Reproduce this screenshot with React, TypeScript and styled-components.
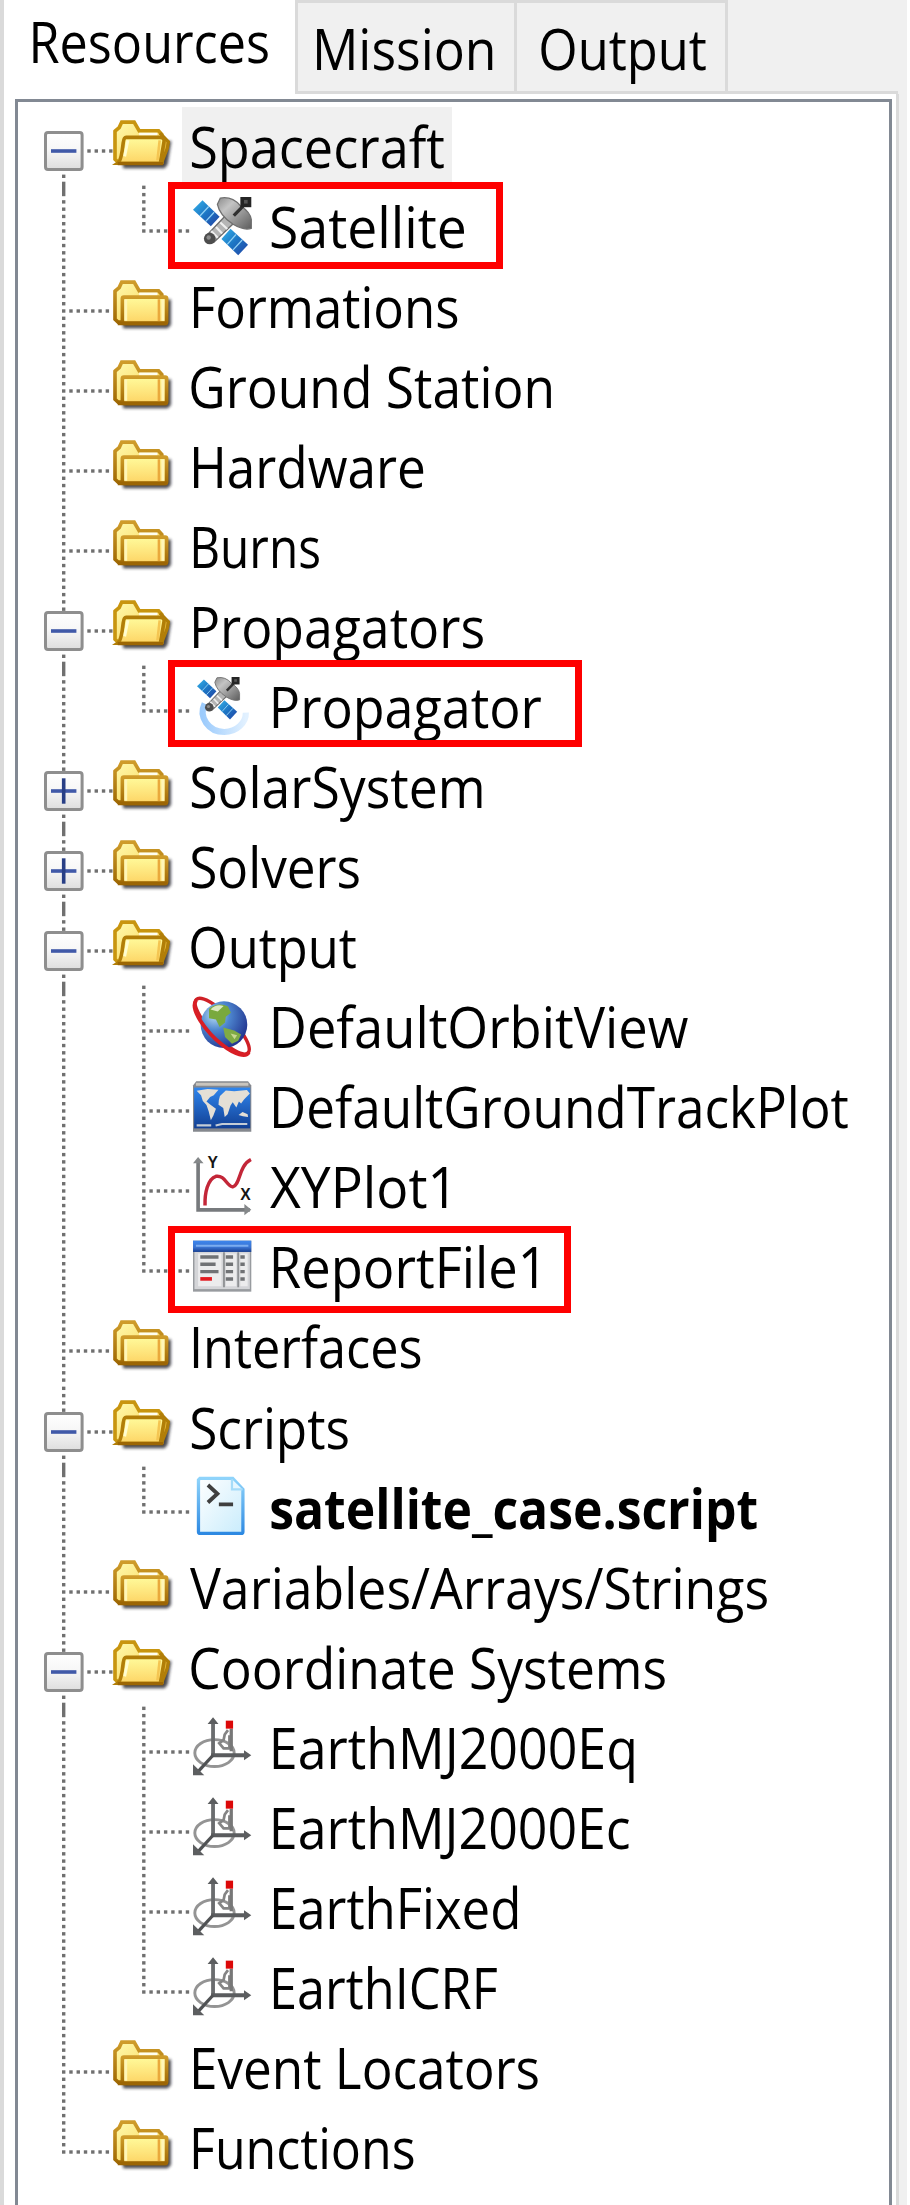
import React from 'react';
import styled, { createGlobalStyle } from 'styled-components';

const FONT = '"Open Sans", "Noto Sans", sans-serif';
const SIZE = 56;
const ROW = 80.04;
const STEP = ROW / 11;
const PANEL_X = 18;
const ICON = 58.3;

const GlobalStyle = createGlobalStyle`
  html, body { margin: 0; background: #fff; overflow: hidden; }
  * { box-sizing: border-box; }
`;

const Window = styled.div`
  display: flex;
  flex-direction: column;
  width: 907px;
  height: 2205px;
  overflow: hidden;
  background: #f0f0f0;
  border-left: 4px solid #dadada;
  font-family: ${FONT};
  font-size: ${SIZE}px;
  color: #000;
`;

const TabBar = styled.div`
  display: flex;
  flex: none;
  height: 94px;
`;

const Tab = styled.div<{ $width: number; $active?: boolean }>`
  flex: none;
  width: ${p => p.$width}px;
  height: 94px;
  padding-top: ${p => (p.$active ? 0 : 4)}px;
  line-height: 80px;
  background: ${p => (p.$active ? '#fff' : '#f0f0f0')};
  border: solid #dadada;
  border-width: ${p => (p.$active ? '0' : '3px 3px 3px 0')};
`;

const ActiveEdge = styled.div`
  flex: none;
  width: 3px;
  background: #dadada;
`;

const TabFiller = styled.div`
  width: 170px;
  border-bottom: 3px solid #dadada;
`;

const Page = styled.div`
  flex: 1;
  width: 895px;
  padding: 5px 4px 0 11px;
  background: #fff;
  border-right: 3px solid #dadada;
`;

const Panel = styled.div`
  width: 877px;
  height: 2120px;
  padding-top: 5px;
  border: 3px solid #828993;
  background: #fff;
`;

const Row = styled.div`
  position: relative;
  display: flex;
  height: ${ROW}px;
`;

const Gutter = styled.svg`
  flex: none;
  overflow: visible;
`;

const IconSlot = styled.svg`
  position: relative;
  flex: none;
  width: ${ICON}px;
  height: ${ICON}px;
  margin: 9.6px 11px 0 0;
  overflow: visible;
`;

const LabelCell = styled.div<{ $selected?: boolean }>`
  flex: none;
  width: ${p => (p.$selected ? '270px' : 'auto')};
  height: ${ROW}px;
  line-height: 80px;
  background: ${p => (p.$selected ? '#f0f0f0' : 'transparent')};
`;

const Text = styled.span<{ $bold?: boolean }>`
  display: inline-block;
  white-space: pre;
  font-weight: ${p => (p.$bold ? 700 : 400)};
  transform-origin: 0 0;
`;

const Marker = styled.div<{ $top: number; $width: number }>`
  position: absolute;
  left: ${168 - PANEL_X}px;
  top: ${p => p.$top}px;
  width: ${p => p.$width}px;
  height: 87px;
  border: 7px solid #fe0000;
`;

/* Text stretched so its visible glyphs run from `from` to `to`, relative to its cell. */
function Fitted({ text, from, to, bold, dy = -0.9 }: { text: string; from: number; to: number; bold?: boolean; dy?: number }) {
  const transform = React.useMemo(() => {
    const ctx = document.createElement('canvas').getContext('2d')!;
    ctx.font = `${bold ? 700 : 400} ${SIZE}px ${FONT}`;
    const m = ctx.measureText(text);
    const k = (to - from) / (m.actualBoundingBoxRight + m.actualBoundingBoxLeft);
    return `translate(${from + m.actualBoundingBoxLeft * k}px, ${dy}px) scaleX(${k})`;
  }, [text, from, to, bold, dy]);
  return <Text $bold={bold} style={{ transform }}>{text}</Text>;
}

const Defs = () => (
  <svg width="0" height="0" style={{ position: 'absolute' }}>
    <defs>
      <linearGradient id="front" x1="0" y1="0" x2="0" y2="1">
        <stop offset="0" stopColor="#fffb9c" /><stop offset="1" stopColor="#fdd465" />
      </linearGradient>
      <linearGradient id="back" x1="0" y1="0" x2="1" y2="1">
        <stop offset="0" stopColor="#fffbb0" /><stop offset=".6" stopColor="#fbe070" /><stop offset="1" stopColor="#e9b030" />
      </linearGradient>
      <linearGradient id="rim" x1="0" y1="0" x2="0" y2="1">
        <stop offset="0" stopColor="#cf9c2a" /><stop offset="1" stopColor="#a06a04" />
      </linearGradient>
      <linearGradient id="box" x1="0" y1="0" x2="0" y2="1">
        <stop offset="0" stopColor="#fff" /><stop offset=".45" stopColor="#f7f7f7" /><stop offset="1" stopColor="#dedede" />
      </linearGradient>
      <linearGradient id="solar" x1="0" y1="0" x2="1" y2="1">
        <stop offset="0" stopColor="#35b3ea" /><stop offset=".5" stopColor="#1c75c4" /><stop offset="1" stopColor="#2344a4" />
      </linearGradient>
      <linearGradient id="metal" x1="0" y1="0" x2="1" y2="1">
        <stop offset="0" stopColor="#8c8c8c" /><stop offset=".3" stopColor="#c4c4c4" /><stop offset="1" stopColor="#5c5c5c" />
      </linearGradient>
      <linearGradient id="ring" x1="0" y1="0" x2="1" y2="0">
        <stop offset="0" stopColor="#9ccbfc" /><stop offset="1" stopColor="#e2f1ff" />
      </linearGradient>
      <radialGradient id="ocean" cx=".3" cy=".3" r=".8">
        <stop offset="0" stopColor="#b9dcf5" /><stop offset=".4" stopColor="#4d86cf" /><stop offset="1" stopColor="#1f2f8c" />
      </radialGradient>
      <linearGradient id="sea" x1="0" y1="0" x2="0" y2="1">
        <stop offset="0" stopColor="#2f86ee" /><stop offset="1" stopColor="#123f93" />
      </linearGradient>
      <linearGradient id="title" x1="0" y1="0" x2="0" y2="1">
        <stop offset="0" stopColor="#3c86ee" /><stop offset=".6" stopColor="#3a72cf" /><stop offset="1" stopColor="#173f92" />
      </linearGradient>
      <linearGradient id="sheet" x1="0" y1="0" x2="1" y2="1">
        <stop offset="0" stopColor="#fff" /><stop offset="1" stopColor="#c9ecfc" />
      </linearGradient>
      <linearGradient id="sheetRim" x1="0" y1="0" x2="0" y2="1">
        <stop offset="0" stopColor="#8fd4fb" /><stop offset="1" stopColor="#2d89e2" />
      </linearGradient>
      <filter id="soft" x="-20%" y="-20%" width="140%" height="140%"><feGaussianBlur stdDeviation=".4" /></filter>
    </defs>
  </svg>
);

const BACK = 'M.55 3.9 1.7 2.9 2.4 1.4H5.8L7.2 3.8H12.5L13.4 4.8V12.4H1.4L.55 11.6Z';

const ClosedFolder = () => (
  <>
    <path d="M2 6.4 15.9 6.2V13.2L15 14.1H2.8Z" fill="#1c1c24" opacity=".8" filter="url(#soft)" />
    <path d={BACK} fill="url(#back)" stroke="url(#rim)" strokeWidth="1" />
    <path d="M7.2 4.7H12.2" stroke="#fffef0" strokeWidth=".9" />
    <rect x="2.6" y="5.5" width="12.1" height="7.2" rx=".4" fill="url(#front)" stroke="url(#rim)" strokeWidth="1.05" />
    <path d="M3.5 6.2V12M13.7 6.2V12" stroke="#fff6b8" strokeWidth=".8" />
    <path d="M12.6 6.1V12.1" stroke="#e9a93c" strokeWidth=".7" />
    <path d="M1.3 12.75H14.9" stroke="#9c6604" strokeWidth="1" />
  </>
);

const OpenFolder = () => (
  <>
    <path d="M2.2 7 16 6.6 15 13 14.2 14.1H2.8Z" fill="#1c1c24" opacity=".8" filter="url(#soft)" />
    <path d={BACK} fill="url(#back)" stroke="#c8950f" strokeWidth="1" />
    <path d="M7.2 4.7H12.2" stroke="#fffef0" strokeWidth=".8" />
    <path d="M12.9 4.4 15.2 6.8 14.9 8.6 13.3 12.7" fill="#e4b63a" stroke="#b17e08" strokeWidth=".9" />
    <path d="M3.6 5.6H12.9Q14.2 5.6 14 6.8L13 12.7H1.3Q2.3 12 2.8 7.1Q3 5.6 3.6 5.6Z" fill="url(#front)" stroke="#b17e08" strokeWidth="1" />
    <path d="M4.1 6.4 3.2 10.8" stroke="#fffdd0" strokeWidth=".8" />
    <path d="M12.8 6.4 12.2 11.9" stroke="#f4c552" strokeWidth=".7" />
    <path d="M1.3 12.8H13.8" stroke="#9c6604" strokeWidth=".9" />
  </>
);

const Satellite = () => (
  <>
    <path d="M0 3.5 2.6.9 7.3 5.4 4.9 8Z" fill="url(#solar)" />
    <path d="M10.3 8.7 15.1 13.1 12.4 16 7.8 11.5Z" fill="url(#solar)" />
    <path d="M1.9 5.2 4.3 2.6M3.5 6.7 5.8 4.2M9.4 13 11.8 10.3M11 14.5 13.5 11.8" stroke="#8fd0f5" strokeWidth=".35" />
    <path d="M9.4 4.6 11.4 7 5.7 12.4 3.7 10.6Z" fill="#b5b5b5" stroke="#6c6c6c" strokeWidth=".4" />
    <path d="M5 9.3 6.8 11.2M6.3 8.2 8 10M7.5 7 9.4 8.8" stroke="#efefef" strokeWidth=".6" />
    <circle cx="4.6" cy="11.4" r="1.6" fill="#4d4d4d" /><circle cx="4.3" cy="11.1" r=".6" fill="#8b8b8b" />
    <path d="M7.5.3Q10.7-.3 13 2.4Q15.7 4.1 16 6.2V8.6Q14 9.3 11 7.5Q7.3 5 6.7 2Z" fill="url(#metal)" stroke="#707070" strokeWidth=".35" />
    <path d="M11.2 5.1 14 2.2" stroke="#303030" strokeWidth=".9" />
    <rect x="13" y="0" width="3" height="2.8" fill="#252525" /><rect x="14" y=".8" width="1" height="1" fill="#555" />
  </>
);

const Propagator = () => (
  <>
    <path d="M3.2 7.3C1.4 11 4.3 15.1 8.6 15.1C12 15.1 14.6 12.5 14.5 9.8" fill="none" stroke="url(#ring)" strokeWidth="1.7" />
    <g transform="translate(1.1 0) scale(.73)"><Satellite /></g>
  </>
);

const Globe = () => (
  <>
    <ellipse cx="8" cy="8" rx="10.2" ry="3.1" transform="rotate(46 8 8)" fill="none" stroke="#cf2026" strokeWidth=".95" />
    <circle cx="8.5" cy="7.6" r="6.4" fill="url(#ocean)" />
    <path d="M4.4 3.2Q7 1.3 9.6 2.6L10.4 4.3 9 5.4 8.8 7 7.3 8.2 6.3 6.2 4.4 5.8Z" fill="#79a93d" />
    <path d="M4.8 3.4Q6.5 1.8 8.4 2.5L6.8 4Z" fill="#dceac0" />
    <path d="M8.3 8.4 11.3 9.2 13.2 10.3 12.4 12 10.7 12.8 8.8 11Z" fill="#7fab45" />
    <path d="M10.3 10 12.1 10.5 11.4 11.6Z" fill="#c9d890" />
    <path d="M.9.9C-1.1 3.2 3.6 9.6 8.1 13.2C11.5 15.9 14.6 16.6 15.3 15.2" fill="none" stroke="#d91e25" strokeWidth="1.05" />
  </>
);

const WorldMap = () => (
  <>
    <path d="M.9 1.2H15.1L16 2.3V15H0V2.3Z" fill="#85888e" />
    <path d="M.8 2H15.2" stroke="#c9c5be" strokeWidth=".8" />
    <rect x=".3" y="2.9" width="15.4" height="11.2" fill="url(#sea)" />
    <path d="M1 3.8 4 3.3 7 3.5 5.7 5 4.7 5.5 3.7 6.7 4.8 7.6 6.3 8.7 5.6 10.6 4.9 11.9 4.3 9.4 3.7 7.7 2.7 6.6 2.2 5Z" fill="#e4dfd6" />
    <path d="M7.4 5.2 9 3.7 11.3 3.9 14.8 3.6 15.6 4.5 14 6.2 13.2 7.3 12.6 6.7 11.9 8.4 10.9 6.9 10.3 7.8 9.5 10.2 8.7 11 8.3 8.5 7 7.6 7.1 6.3Z" fill="#e4dfd6" />
    <path d="M12.5 10.4 13.6 9.6 15 10.2 15.1 11 13.7 10.8Z" fill="#e4dfd6" />
    <path d="M1 13.3H5M6.2 13.3 8 12.9H14.9" stroke="#c4ccd6" strokeWidth=".6" fill="none" />
  </>
);

const XYPlot = () => (
  <>
    <path d="M1.4 1V14.5H15.6" fill="none" stroke="#777a7d" strokeWidth="1" />
    <path d="M0 1.7 1.4 0 2.9 1.7ZM14.1 12.9 16 14.5 14.1 16Z" fill="#85888a" />
    <path d="M3.3 13.3C3.2 10 4 6 6.3 5.3C8.8 4.9 9.2 8 10.9 8.2C13.1 7.6 12.4 2.5 15.9.7" fill="none" stroke="#c32638" strokeWidth=".95" />
    <g fontFamily="Liberation Sans" fontWeight="700" fontSize="4.3" fill="#151515">
      <text x="4" y="3">Y</text><text x="13" y="11.8">X</text>
    </g>
  </>
);

const Report = () => (
  <>
    <rect x="0" y="1" width="16" height="14" fill="#989b9f" />
    <rect x=".4" y="4" width="15.2" height="10.3" fill="#d4d5d8" />
    <rect x="0" y="1" width="16" height="3.1" fill="url(#title)" />
    <path d="M.8 2.4H15.2" stroke="#7badf0" strokeWidth=".6" />
    <path d="M1.4 4.5H7.8V13.5H1.4ZM9 4.5H11.9V13.5H9ZM13 4.5H15V13.5H13Z" fill="#ececed" />
    <path d="M8.5 4.2V13.8M12.4 4.2V13.8" stroke="#8f9194" strokeWidth=".5" />
    <path d="M2 5.5H7M2 7.5H6.2M2 9.5H7M9 5.5H11M9 7.5H11M9 9.5H11M9 11.5H11M13 5.5H14.2M13 7.5H14.2M13 9.5H14.2M13 11.5H14.2" stroke="#707275" strokeWidth=".95" />
    <path d="M2 11.5H5.2" stroke="#e21a20" strokeWidth="1" />
  </>
);

const Script = () => (
  <>
    <path d="M1.9.4H10.9L13.7 3.4V15Q13.7 15.5 13.2 15.5H2Q1.5 15.5 1.5 15V.8Z" fill="url(#sheet)" stroke="url(#sheetRim)" strokeWidth=".9" />
    <path d="M10.7.6V3.4H13.6" fill="#e6f7ff" stroke="#a5dcf9" strokeWidth=".6" />
    <path d="M4.1 2.2 6.7 4.6 4.1 7M7.1 7.5H11" fill="none" stroke="#3f3f3f" strokeWidth="1.05" />
  </>
);

const Axes = () => (
  <>
    <ellipse cx="5.9" cy="9.9" rx="5.4" ry="3.7" fill="none" stroke="#949494" strokeWidth=".8" />
    <path d="M9.6 3.6 8.7 4.8 8.4 6.3 7.2 7.2 8.4 8.6H10V5" fill="none" stroke="#858585" strokeWidth=".75" />
    <path d="M10.5 3.2V9.4" stroke="#777" strokeWidth=".9" />
    <path d="M5.5 1V10.5" stroke="#6a6c6e" strokeWidth="1.05" />
    <path d="M5 10.5H15" stroke="#5a5c5e" strokeWidth="1.05" />
    <path d="M5.5 10.5 1.2 15.2" stroke="#505254" strokeWidth=".9" />
    <path d="M4 1.9 5.5.1 7 1.9ZM14 9.1 16 10.5 14 11.9ZM0 13V16H3.1Z" fill="#5c5e60" />
    <rect x="9" y="1" width="2" height="2.2" fill="#dc0808" />
  </>
);

const icons = { closed: ClosedFolder, open: OpenFolder, sat: Satellite, prop: Propagator, globe: Globe, map: WorldMap, xy: XYPlot, report: Report, script: Script, axes: Axes };

type Node = {
  text: string;
  icon: keyof typeof icons;
  to: number;
  from?: number;
  child?: boolean;
  lastChild?: boolean;
  box?: '+' | '-';
  bold?: boolean;
  selected?: boolean;
  mark?: [number, number];
};

const nodes: Node[] = [
  { text: 'Spacecraft', icon: 'open', box: '-', to: 444, selected: true },
  { text: 'Satellite', icon: 'sat', child: true, lastChild: true, to: 464.5, mark: [-5, 335] },
  { text: 'Formations', icon: 'closed', to: 458, from: 193.5 },
  { text: 'Ground Station', icon: 'closed', to: 551 },
  { text: 'Hardware', icon: 'closed', to: 423.5, from: 193.5 },
  { text: 'Burns', icon: 'closed', to: 319.5, from: 193.5 },
  { text: 'Propagators', icon: 'open', box: '-', to: 483.5, from: 193.5 },
  { text: 'Propagator', icon: 'prop', child: true, lastChild: true, to: 542, from: 273.5, mark: [-7.2, 414] },
  { text: 'SolarSystem', icon: 'closed', box: '+', to: 482 },
  { text: 'Solvers', icon: 'closed', box: '+', to: 359.5 },
  { text: 'Output', icon: 'open', box: '-', to: 356 },
  { text: 'DefaultOrbitView', icon: 'globe', child: true, to: 688, from: 273.5 },
  { text: 'DefaultGroundTrackPlot', icon: 'map', child: true, to: 848, from: 273.5 },
  { text: 'XYPlot1', icon: 'xy', child: true, to: 446.5, from: 270 },
  { text: 'ReportFile1', icon: 'report', child: true, lastChild: true, to: 536.5, from: 273.5, mark: [-1.6, 403] },
  { text: 'Interfaces', icon: 'closed', to: 421, from: 193.5 },
  { text: 'Scripts', icon: 'open', box: '-', to: 348.5 },
  { text: 'satellite_case.script', icon: 'script', child: true, lastChild: true, to: 757, bold: true },
  { text: 'Variables/Arrays/Strings', icon: 'closed', to: 767.5, from: 190 },
  { text: 'Coordinate Systems', icon: 'open', box: '-', to: 665.5 },
  { text: 'EarthMJ2000Eq', icon: 'axes', child: true, to: 634, from: 273.5 },
  { text: 'EarthMJ2000Ec', icon: 'axes', child: true, to: 629, from: 273.5 },
  { text: 'EarthFixed', icon: 'axes', child: true, to: 517.5, from: 273.5 },
  { text: 'EarthICRF', icon: 'axes', child: true, lastChild: true, to: 497, from: 273.5 },
  { text: 'Event Locators', icon: 'closed', to: 538.5, from: 193.5 },
  { text: 'Functions', icon: 'closed', to: 414, from: 193.5 },
];

const range = (a: number, b: number) => Array.from({ length: b - a + 1 }, (_, i) => a + i);

function Branches({ node, index }: { node: Node; index: number }) {
  const x = 63.7 - PANEL_X;
  const cx = 143.8 - PANEL_X;
  const y = 44;
  const dot = (px: number, py: number) => <rect key={`${px},${py}`} x={px - 1.7} y={py - 1.7} width="3.4" height="3.4" fill="#707070" />;
  const afterBox = index > 0 && !!nodes[index - 1].box;
  const first = index === 0;
  const last = index === nodes.length - 1;
  const rail = range(-6, 4)
    .filter(k => !(afterBox && k < -4) && !(last && k > 0))
    .filter(k => !node.box || (!first && k < -2));
  return (
    <Gutter width={(node.child ? 192.7 : 112.7) - PANEL_X} height={ROW}>
      {rail.map(k => dot(x, y + k * STEP))}
      {afterBox && <rect x={x - 1.7} y="-5.3" width="3.4" height="14.5" fill="#707070" />}
      {node.child && range(-6, node.lastChild ? 0 : 4).map(k => dot(cx, y + k * STEP))}
      {node.child && range(1, 6).map(k => dot(cx + k * STEP, y))}
      {!node.child && !node.box && range(1, 6).map(k => dot(x + k * STEP, y))}
      {node.box && (
        <>
          {range(0, 3).map(k => dot(89 - PANEL_X + k * STEP, y))}
          {dot(x, 69.3)}
          <rect x={x - 18.2} y={y - 18.5} width="36.6" height="37" rx="2.5" fill="url(#box)" stroke="#8e8e8e" strokeWidth="3" />
          <rect x={x - 12.7} y={y - 1.8} width="25.4" height="3.6" fill="#4059a8" />
          {node.box === '+' && <rect x={x - 1.8} y={y - 12.7} width="3.6" height="25.4" fill="#283f86" />}
        </>
      )}
    </Gutter>
  );
}

function TreeRow({ node, index }: { node: Node; index: number }) {
  const Glyph = icons[node.icon];
  const origin = node.child ? 262 : 182;
  return (
    <Row>
      <Branches node={node} index={index} />
      <IconSlot viewBox="0 0 16 16"><Glyph /></IconSlot>
      <LabelCell $selected={node.selected}>
        <Fitted text={node.text} bold={node.bold} from={(node.from ?? origin + 9) - origin} to={node.to - origin} />
      </LabelCell>
      {node.mark && <Marker $top={node.mark[0]} $width={node.mark[1]} />}
    </Row>
  );
}

export default function App() {
  return (
    <>
      <GlobalStyle />
      <Defs />
      <Window>
        <TabBar>
          <Tab $width={291} $active><Fitted text="Resources" from={29} to={264.5} dy={0.8} /></Tab>
          <ActiveEdge />
          <Tab $width={219}><Fitted text="Mission" from={18.5} to={194.5} dy={0.8} /></Tab>
          <Tab $width={211}><Fitted text="Output" from={24} to={189} dy={0.8} /></Tab>
          <TabFiller />
        </TabBar>
        <Page>
          <Panel>
            {nodes.map((n, i) => <TreeRow key={i} node={n} index={i} />)}
          </Panel>
        </Page>
      </Window>
    </>
  );
}
